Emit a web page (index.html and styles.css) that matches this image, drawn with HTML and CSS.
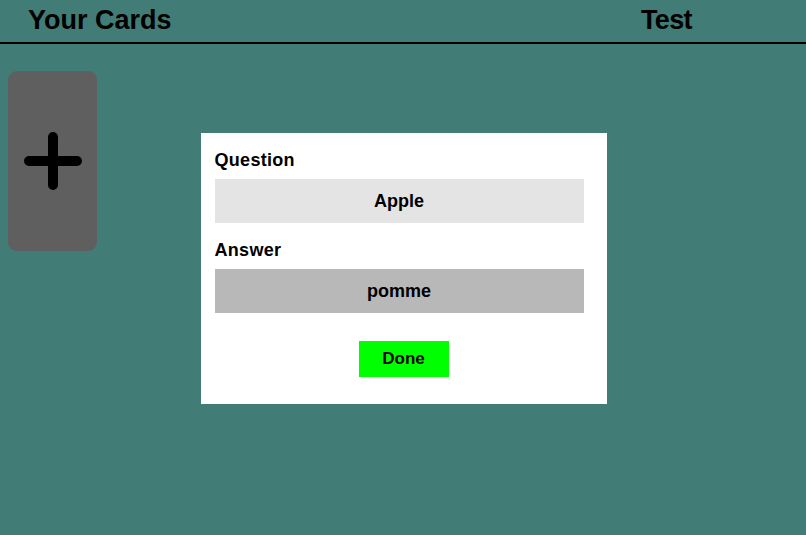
FILE: index.html
```html
<!DOCTYPE html>
<html lang="en">
<head>
<meta charset="utf-8">
<title>Your Cards</title>
<link rel="stylesheet" href="styles.css">
</head>
<body>
<header class="topbar">
  <h1 class="title">Your Cards</h1>
  <h2 class="title title-test">Test</h2>
</header>
<main class="cards">
  <button class="add-card" aria-label="Add card">
    <svg class="plus" width="58" height="58" viewBox="0 0 58 58">
      <path d="M29 5 V53 M5 29 H53" stroke="#000" stroke-width="10" stroke-linecap="round" fill="none"/>
    </svg>
  </button>
</main>
<div class="overlay">
  <div class="modal">
    <div class="fields">
      <label class="label">Question</label>
      <div class="field field-question">Apple</div>
      <label class="label label-answer">Answer</label>
      <div class="field field-answer">pomme</div>
    </div>
    <button class="done">Done</button>
  </div>
</div>
</body>
</html>
```
FILE: styles.css
```css
html, body {
  margin: 0;
  padding: 0;
}
body {
  width: 806px;
  height: 535px;
  background: #417c76;
  font-family: "Liberation Sans", Arial, sans-serif;
  color: #000;
  overflow: hidden;
}
.topbar {
  display: flex;
  justify-content: space-between;
  align-items: flex-start;
  height: 42px;
  border-bottom: 2px solid #000;
  padding: 0 114px 0 28px;
}
.title {
  margin: 0;
  font-size: 27px;
  font-weight: bold;
  line-height: 30px;
  padding-top: 5px;
}
.title-test {
  letter-spacing: -0.6px;
}
.cards {
  display: flex;
  padding: 27px 0 0 8px;
}
.add-card {
  width: 89px;
  height: 180px;
  border: none;
  border-radius: 9px;
  background: #5f5f5f;
  display: flex;
  align-items: center;
  justify-content: center;
  padding: 0;
}
.overlay {
  position: fixed;
  inset: 0;
  display: flex;
  align-items: center;
  justify-content: center;
}
.modal {
  width: 406px;
  background: #fff;
  padding: 17px 0 27px 0;
  display: flex;
  flex-direction: column;
  box-sizing: border-box;
  margin-top: 2px;
  margin-left: 1px;
}
.fields {
  margin-left: 14px;
  width: 369px;
  display: flex;
  flex-direction: column;
}
.label {
  font-size: 18px;
  font-weight: bold;
  line-height: 21px;
  height: 21px;
  letter-spacing: 0.3px;
  margin-bottom: 8px;
}
.label-answer {
  margin-top: 17px;
}
.field {
  height: 44px;
  display: flex;
  align-items: center;
  justify-content: center;
  font-size: 18px;
  font-weight: bold;
}
.field-question {
  background: #e4e4e4;
}
.field-answer {
  background: #b8b8b8;
}
.done {
  align-self: center;
  margin-top: 28px;
  width: 90px;
  height: 36px;
  border: none;
  background: #00ff00;
  font-family: "Liberation Sans", Arial, sans-serif;
  font-size: 17px;
  font-weight: bold;
  color: #000;
  padding: 0;
}
```
